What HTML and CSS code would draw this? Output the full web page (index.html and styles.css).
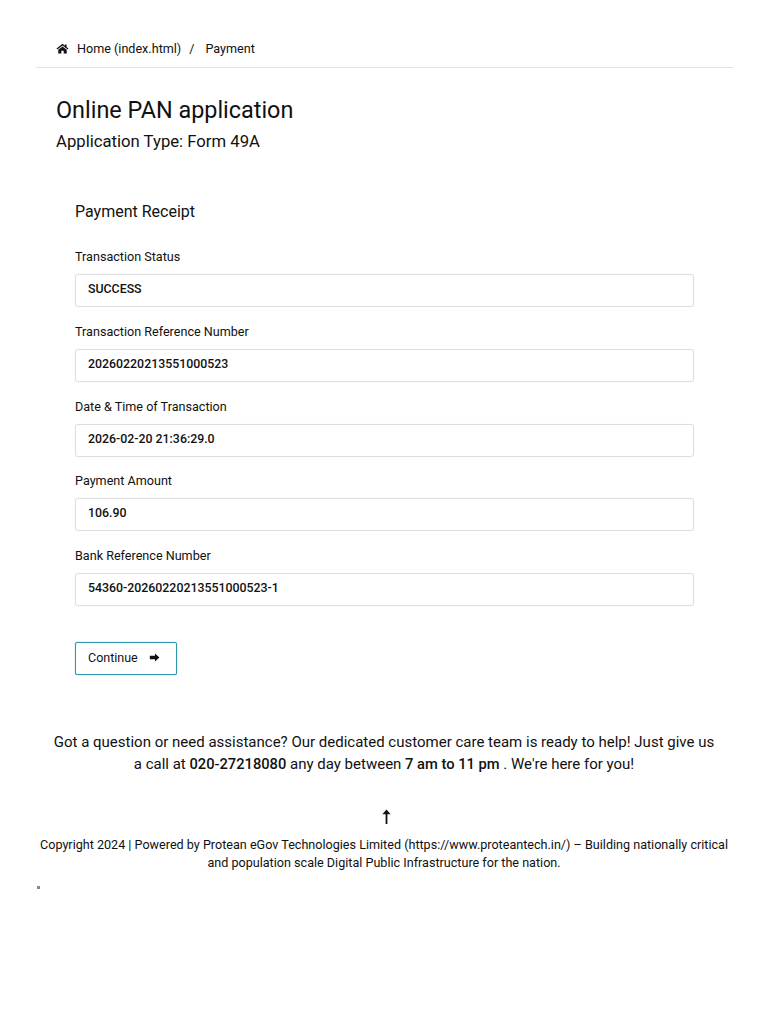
FILE: index.html
```html
<!DOCTYPE html>
<html lang="en">
<head>
<meta charset="utf-8">
<title>Payment Receipt</title>
<link rel="stylesheet" href="styles.css">
</head>
<body>
<nav class="crumbs">
  <svg class="home" viewBox="0 0 24 20" aria-hidden="true"><path d="M12 1.2 L1 10.2 L2.4 12 L12 4.4 L21.6 12 L23 10.2 L19.5 7.3 V2.5 H16.5 V4.9 Z"/><path d="M12 6.2 L4.2 12.4 V19 H9.8 V14 H14.2 V19 H19.8 V12.4 Z"/></svg>
  <span>Home (index.html)</span><span class="sep">/</span><span>Payment</span>
</nav>
<header class="head">
  <h1>Online PAN application</h1>
  <h2>Application Type: Form 49A</h2>
</header>
<main class="receipt">
  <h3>Payment Receipt</h3>
  <div class="field"><label>Transaction Status</label><div class="value">SUCCESS</div></div>
  <div class="field"><label>Transaction Reference Number</label><div class="value">20260220213551000523</div></div>
  <div class="field"><label>Date &amp; Time of Transaction</label><div class="value">2026-02-20 21:36:29.0</div></div>
  <div class="field"><label>Payment Amount</label><div class="value">106.90</div></div>
  <div class="field"><label>Bank Reference Number</label><div class="value">54360-20260220213551000523-1</div></div>
  <button class="continue" type="button">Continue
    <svg class="arrow" viewBox="0 0 12 10" aria-hidden="true"><path d="M6.5 0.5 L11.5 5 L6.5 9.5 V7 H0.8 V3 H6.5 Z"/></svg>
  </button>
</main>
<section class="help">
  <p>Got a question or need assistance? Our dedicated customer care team is ready to help! Just give us a call at <b>020-27218080</b> any day between <b>7 am to 11 pm</b> . We're here for you!</p>
</section>
<footer class="foot">
  <svg class="up" viewBox="0 0 12 18" aria-hidden="true"><path d="M6 0.5 L10.6 6 H7 V17 H5 V6 H1.4 Z"/></svg>
  <p>Copyright 2024 | Powered by Protean eGov Technologies Limited (https://www.proteantech.in/) – Building nationally critical and population scale Digital Public Infrastructure for the nation.</p>
</footer>
<div class="dot"></div>
</body>
</html>
```
FILE: styles.css
```css
html, body { margin: 0; padding: 0; background: #fff; }
body {
  font-family: Roboto, "Liberation Sans", sans-serif;
  color: #111;
  width: 768px;
  height: 1024px;
  overflow: hidden;
}
.crumbs {
  margin: 0 35px 0 36px;
  height: 68px;
  box-sizing: border-box;
  padding: 40px 0 0 20px;
  border-bottom: 1px solid #e2e2e2;
  font-size: 12.6px;
  line-height: 17px;
  display: flex;
  align-items: flex-start;
}
.home { width: 13px; height: 11px; margin: 3px 8px 0 0; fill: #111; }
.sep { margin: 0 11px 0 8px; }
.head { padding: 27px 0 0 56px; }
h1 { margin: 0; font-size: 23.4px; line-height: 30px; font-weight: 400; }
h2 { margin: 6px 0 0; font-size: 16.7px; line-height: 22px; font-weight: 400; }
.receipt { padding: 48px 0 0 75px; width: 619px; }
h3 { margin: 0 0 25px; font-size: 16px; line-height: 22px; font-weight: 400; }
.field { margin-bottom: 15.75px; }
label { display: block; font-size: 12.6px; line-height: 17px; margin-bottom: 9px; }
.value {
  height: 33px;
  box-sizing: border-box;
  border: 1px solid #dedede;
  border-radius: 3px;
  padding: 0 12px;
  font-size: 12.35px;
  font-weight: 500;
  line-height: 29px;
  box-shadow: 0 0 1px #e4e4e4;
}
.continue {
  display: flex;
  align-items: center;
  gap: 11px;
  margin-top: 36px;
  width: 102px;
  height: 33px;
  padding: 0 12px 3px;
  background: #fff;
  border: 1px solid #2b97ad;
  border-radius: 2px;
  box-shadow: 0 0 1px #2b97ad;
  font: 400 12.5px/17px Roboto, "Liberation Sans", sans-serif;
  color: #111;
}
.arrow { width: 11px; height: 9px; fill: #111; }
.help { padding: 56px 50px 0; text-align: center; font-size: 15px; line-height: 22px; }
.help p { margin: 0; }
.help b { font-weight: 500; font-size: 14.7px; }
.foot { text-align: center; padding: 0 36px; margin-top: 34px; }
.up { display: block; width: 11px; height: 16px; margin: 0 0 0 344.5px; fill: #111; }
.foot p { margin: 11px 0 0; font-size: 12.6px; line-height: 18px; }
.dot { width: 3px; height: 3px; background: #888; margin: 14px 0 0 37px; }
```
